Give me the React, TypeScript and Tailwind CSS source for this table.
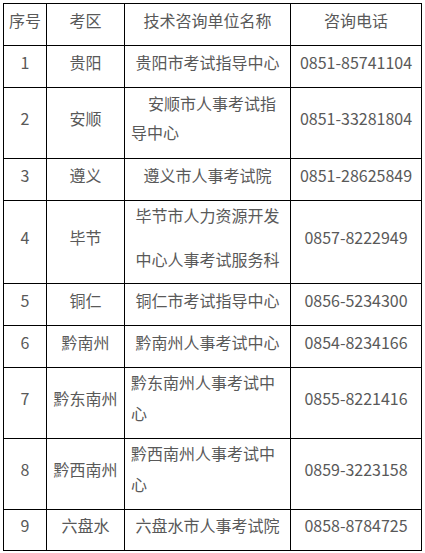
const ROWS = [
  { no: '1', area: '贵阳', unit: '贵阳市考试指导中心', tel: '0851-85741104' },
  { no: '2', area: '安顺', unit: '安顺市人事考试指导中心', tel: '0851-33281804', kind: 'indent' },
  { no: '3', area: '遵义', unit: '遵义市人事考试院', tel: '0851-28625849' },
  { no: '4', area: '毕节', unit: ['毕节市人力资源开发', '中心人事考试服务科'], tel: '0857-8222949', kind: 'split' },
  { no: '5', area: '铜仁', unit: '铜仁市考试指导中心', tel: '0856-5234300' },
  { no: '6', area: '黔南州', unit: '黔南州人事考试中心', tel: '0854-8234166' },
  { no: '7', area: '黔东南州', unit: '黔东南州人事考试中心', tel: '0855-8221416', kind: 'left' },
  { no: '8', area: '黔西南州', unit: '黔西南州人事考试中心', tel: '0859-3223158', kind: 'left' },
  { no: '9', area: '六盘水', unit: '六盘水市人事考试院', tel: '0858-8784725' },
];

const cell = 'flex items-center justify-center border-r border-b border-black pb-[10px] text-center';

function UnitCell({ unit, kind }: { unit: string | string[]; kind?: string }) {
  if (kind === 'split' && Array.isArray(unit)) {
    return (
      <div className={cell}>
        <div className="leading-[44px]">
          {unit.map((line) => (
            <div key={line}>{line}</div>
          ))}
        </div>
      </div>
    );
  }
  if (kind === 'indent') {
    return (
      <div className="flex items-center border-r border-b border-black pb-[10px] px-[6px]">
        <p className="w-full text-left leading-[29px] indent-[17px]">{unit}</p>
      </div>
    );
  }
  if (kind === 'left') {
    return (
      <div className="flex items-center border-r border-b border-black pb-[10px] px-[6px]">
        <p className="w-full text-left leading-[31px]">{unit}</p>
      </div>
    );
  }
  return <div className={cell}>{unit}</div>;
}

export default function App() {
  return (
    <div className="min-h-screen bg-white pt-[3px] pl-[3px]">
      <div
        className="grid w-fit grid-cols-[43px_78px_166px_131px] grid-rows-[42px_42px_71px_42px_83px_42px_42px_71px_71px_41px] border-l border-t border-black text-[16px] text-[#595959]"
        style={{ fontFamily: '"Noto Sans CJK SC", "Noto Sans", sans-serif' }}
      >
        <div className={cell}>序号</div>
        <div className={cell}>考区</div>
        <div className={cell}>技术咨询单位名称</div>
        <div className={cell}>咨询电话</div>
        {ROWS.map((r) => (
          <div key={r.no} className="contents">
            <div className={cell}>{r.no}</div>
            <div className={cell}>{r.area}</div>
            <UnitCell unit={r.unit} kind={r.kind} />
            <div className={cell}>{r.tel}</div>
          </div>
        ))}
      </div>
    </div>
  );
}
